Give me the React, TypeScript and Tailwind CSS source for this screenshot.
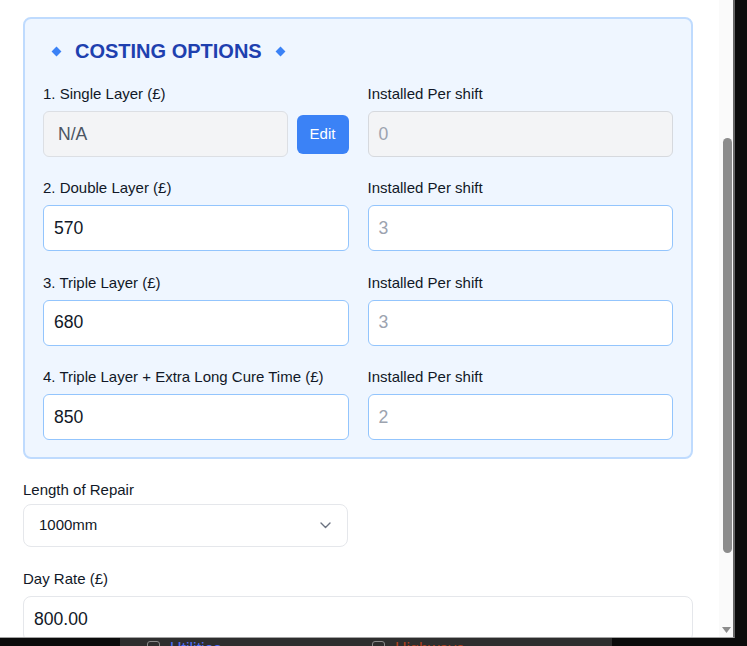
import React from "react";

const font = { fontFamily: '"Liberation Sans", Arial, sans-serif' };

function Diamond() {
  return <span className="block w-[7px] h-[7px] rotate-45 bg-[#3b82f6]" />;
}

function Label({ children }: { children: React.ReactNode }) {
  return <div className="text-[15px] leading-5 text-[#111827] mb-[7px]">{children}</div>;
}

function BlueInput({ value }: { value: string }) {
  return (
    <div className="h-[46px] flex items-center rounded-md border border-[#93c5fd] bg-white pl-[10px] text-[17.6px] text-[#111827]">
      {value}
    </div>
  );
}

function PlaceholderInput({ value }: { value: string }) {
  return (
    <div className="h-[46px] flex items-center rounded-md border border-[#93c5fd] bg-white pl-[10px] text-[17.6px] text-[#9ca3af]">
      {value}
    </div>
  );
}

const rows = [
  { label: "2. Double Layer (£)", value: "570", shift: "3" },
  { label: "3. Triple Layer (£)", value: "680", shift: "3" },
  { label: "4. Triple Layer + Extra Long Cure Time (£)", value: "850", shift: "2" },
];

export default function App() {
  return (
    <div className="relative w-[747px] h-[646px] overflow-hidden bg-[#0b0b0b]" style={font}>
      {/* background page peeking below the modal */}
      <div className="absolute left-[120px] top-[600px] w-[492px] h-[100px] bg-[#2e2e2e]">
        <div className="flex items-start pt-[41px]">
          <div className="flex items-start w-[252px] pl-[27px] gap-[10px]">
            <span className="block w-[13px] h-[13px] rounded-[3px] border border-[#8a8a8a]" />
            <span className="text-[16px] leading-none text-[#4f6ef7]">Utilities</span>
          </div>
          <div className="flex items-start gap-[10px]">
            <span className="block w-[13px] h-[13px] rounded-[3px] border border-[#8a8a8a]" />
            <span className="text-[16px] leading-none text-[#b0401c]">Highways</span>
          </div>
        </div>
      </div>

      {/* modal */}
      <div className="absolute left-0 top-0 w-[735px] h-[638px] flex bg-white border-r-2 border-b border-r-[#666666] border-b-[#a3a3a3]">
        <div className="w-[719px] h-full overflow-hidden pl-[23px] pr-[26px] pt-[17px]">
          <div className="rounded-lg border-2 border-[#bfdbfe] bg-[#eff6ff] px-[18px] pt-[18px] pb-[17px]">
            <div className="flex items-center h-[28px] mb-[19px] pl-[10px] gap-[15px]">
              <Diamond />
              <span className="text-[20px] leading-7 font-bold text-[#1e40af]">COSTING OPTIONS</span>
              <Diamond />
            </div>
            <div className="grid grid-cols-2 gap-x-[19px] gap-y-[21.33px]">
              <div>
                <Label>1. Single Layer (£)</Label>
                <div className="flex items-center gap-[9px]">
                  <div className="flex-1 h-[46px] flex items-center rounded-md border border-[#dcdfe4] bg-[#f3f4f6] pl-[14px] text-[17.6px] text-[#4b5563]">
                    N/A
                  </div>
                  <button className="w-[52px] h-[39px] rounded-md bg-[#3b82f6] text-white text-[15px]">Edit</button>
                </div>
              </div>
              <div>
                <Label>Installed Per shift</Label>
                <div className="h-[46px] flex items-center rounded-md border border-[#d6d9de] bg-[#f3f4f6] pl-[10px] text-[17.6px] text-[#9ca3af]">
                  0
                </div>
              </div>
              {rows.map((r) => (
                <React.Fragment key={r.label}>
                  <div>
                    <Label>{r.label}</Label>
                    <BlueInput value={r.value} />
                  </div>
                  <div>
                    <Label>Installed Per shift</Label>
                    <PlaceholderInput value={r.shift} />
                  </div>
                </React.Fragment>
              ))}
            </div>
          </div>

          <div className="grid grid-cols-2 gap-x-5 mt-[21px]">
            <div>
              <div className="text-[15px] leading-5 text-[#111827] mb-1">Length of Repair</div>
              <div className="h-[43px] flex items-center justify-between rounded-lg border border-[#e5e7eb] bg-white pl-[15px] pr-[16px] text-[15px] text-[#111827]">
                <span>1000mm</span>
                <svg width="11" height="7" viewBox="0 0 11 7" fill="none">
                  <path d="M1 1l4.5 4.5L10 1" stroke="#6b7280" strokeWidth="1.4" strokeLinecap="round" strokeLinejoin="round" />
                </svg>
              </div>
            </div>
            <div />
          </div>

          <div className="mt-[22px]">
            <div className="text-[15px] leading-5 text-[#111827] mb-[7px]">Day Rate (£)</div>
            <div className="h-[46px] flex items-center rounded-lg border border-[#e5e7eb] bg-white pl-[10px] text-[17.6px] text-[#111827]">
              800.00
            </div>
          </div>
        </div>

        {/* scrollbar */}
        <div className="relative w-[14px] h-full bg-[#fafafa]">
          <div className="absolute left-[3.5px] top-[138px] w-[9px] h-[415px] rounded-full bg-[#8c8c8c]" />
          <svg className="absolute left-[3px] top-[627px]" width="9" height="6" viewBox="0 0 9 6">
            <path d="M0 0h9L4.5 6z" fill="#8c8c8c" />
          </svg>
        </div>
      </div>
    </div>
  );
}
